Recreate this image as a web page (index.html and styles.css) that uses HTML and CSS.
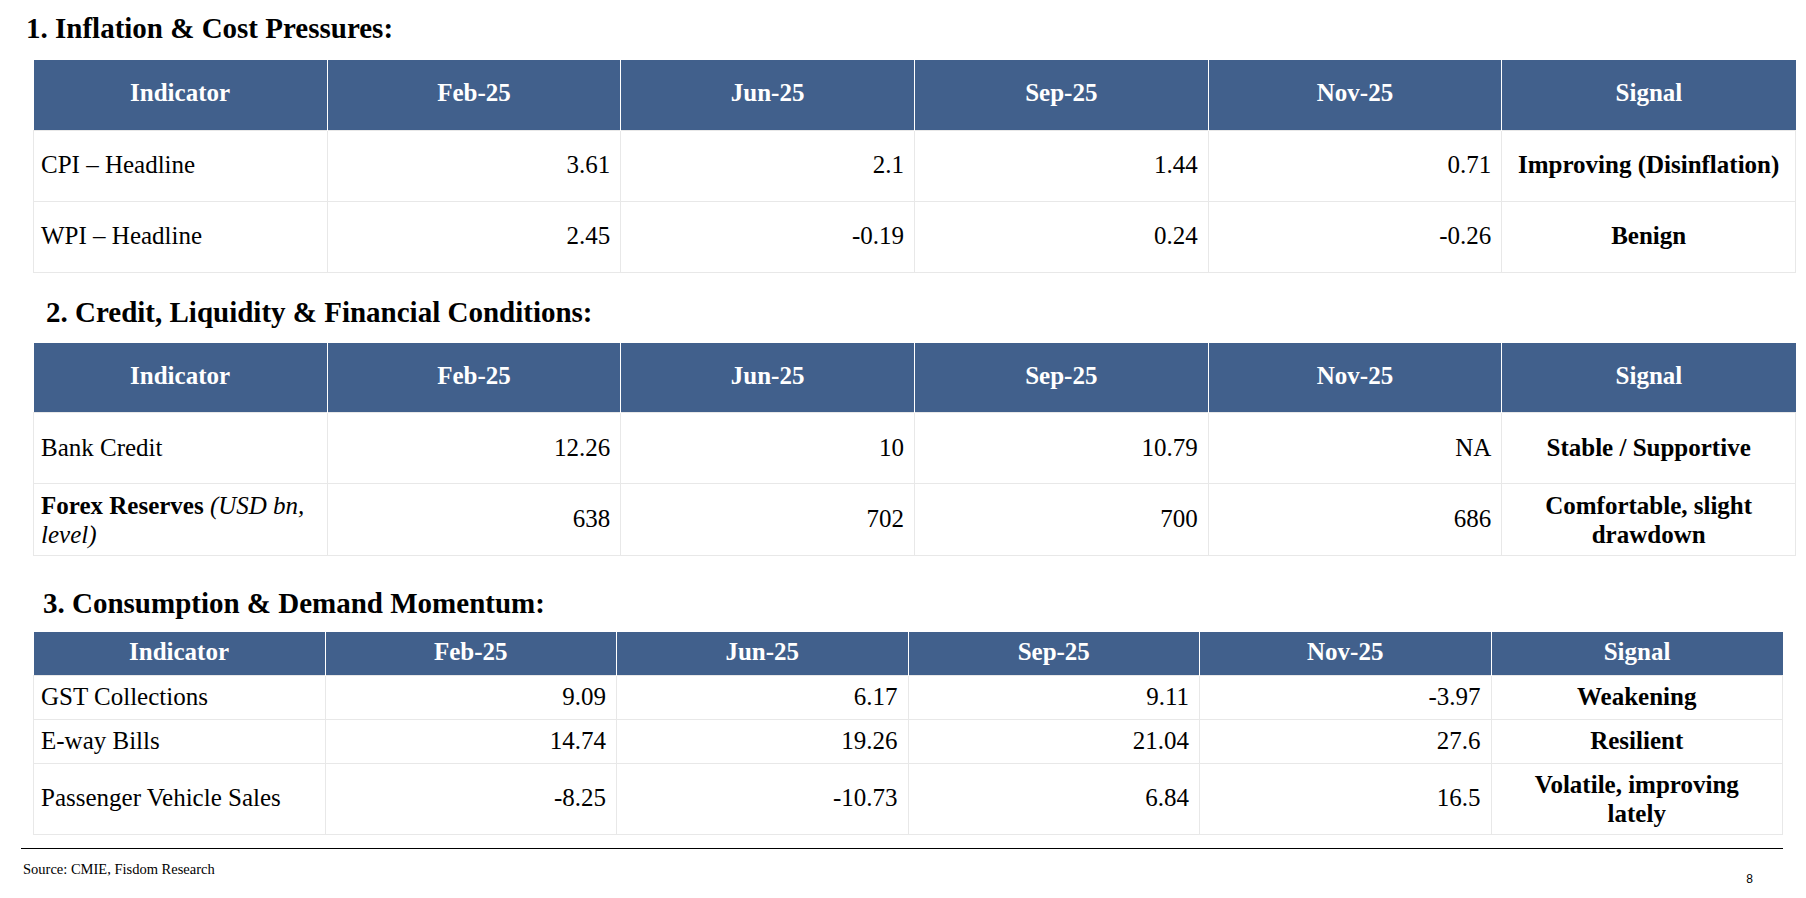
FILE: index.html
```html
<!DOCTYPE html>
<html lang="en">
<head>
<meta charset="utf-8">
<title>Macro Indicators</title>
<link rel="stylesheet" href="styles.css">
</head>
<body>
<div class="page">
  <div class="section-title t1">1. Inflation &amp; Cost Pressures:</div>
  <table class="data data-wide t1-table">
    <thead>
      <tr class="hrow-tall"><th>Indicator</th><th>Feb-25</th><th>Jun-25</th><th>Sep-25</th><th>Nov-25</th><th>Signal</th></tr>
    </thead>
    <tbody>
      <tr class="row-71"><td class="name">CPI – Headline</td><td class="num">3.61</td><td class="num">2.1</td><td class="num">1.44</td><td class="num">0.71</td><td class="signal">Improving (Disinflation)</td></tr>
      <tr class="row-71"><td class="name">WPI – Headline</td><td class="num">2.45</td><td class="num">-0.19</td><td class="num">0.24</td><td class="num">-0.26</td><td class="signal">Benign</td></tr>
    </tbody>
  </table>

  <div class="section-title t2">2. Credit, Liquidity &amp; Financial Conditions:</div>
  <table class="data data-wide t2-table">
    <thead>
      <tr class="hrow-tall"><th>Indicator</th><th>Feb-25</th><th>Jun-25</th><th>Sep-25</th><th>Nov-25</th><th>Signal</th></tr>
    </thead>
    <tbody>
      <tr class="row-71"><td class="name">Bank Credit</td><td class="num">12.26</td><td class="num">10</td><td class="num">10.79</td><td class="num">NA</td><td class="signal">Stable / Supportive</td></tr>
      <tr class="row-72"><td class="name wrap"><b>Forex Reserves</b> <i>(USD bn,</i> <i>level)</i></td><td class="num">638</td><td class="num">702</td><td class="num">700</td><td class="num">686</td><td class="signal wrap">Comfortable, slight drawdown</td></tr>
    </tbody>
  </table>

  <div class="section-title t3">3. Consumption &amp; Demand Momentum:</div>
  <table class="data data-narrow t3-table">
    <thead>
      <tr class="hrow-short"><th>Indicator</th><th>Feb-25</th><th>Jun-25</th><th>Sep-25</th><th>Nov-25</th><th>Signal</th></tr>
    </thead>
    <tbody>
      <tr class="row-44"><td class="name">GST Collections</td><td class="num">9.09</td><td class="num">6.17</td><td class="num">9.11</td><td class="num">-3.97</td><td class="signal">Weakening</td></tr>
      <tr class="row-44"><td class="name">E-way Bills</td><td class="num">14.74</td><td class="num">19.26</td><td class="num">21.04</td><td class="num">27.6</td><td class="signal">Resilient</td></tr>
      <tr class="row-71"><td class="name">Passenger Vehicle Sales</td><td class="num">-8.25</td><td class="num">-10.73</td><td class="num">6.84</td><td class="num">16.5</td><td class="signal wrap">Volatile, improving lately</td></tr>
    </tbody>
  </table>

  <div class="footer">
    <span class="source">Source: CMIE, Fisdom Research</span>
    <span class="page-num">8</span>
  </div>
</div>
</body>
</html>
```

FILE: styles.css
```css
html, body {
  margin: 0;
  padding: 0;
  background: #ffffff;
}

body {
  font-family: "Liberation Serif", "Times New Roman", serif;
  color: #000000;
}

.page {
  width: 1806px;
  height: 898px;
  padding-top: 11px;
  box-sizing: border-box;
  overflow: hidden;
}

.section-title {
  font-size: 29px;
  line-height: 34px;
  font-weight: bold;
  color: #000;
}

.t1 { padding-left: 26px; }
.t2 { padding-left: 46px; margin-top: 22px; }
.t3 { padding-left: 43px; margin-top: 30px; }

.data {
  border-collapse: collapse;
  table-layout: fixed;
  margin-left: 33px;
  font-size: 25px;
  line-height: 1.15;
}

.data-wide { width: 1763px; }
.data-narrow { width: 1750px; }

.t1-table { margin-top: 15px; }
.t2-table { margin-top: 14px; }
.t3-table { margin-top: 12px; }

.data th {
  background: #41608c;
  color: #ffffff;
  font-weight: bold;
  text-align: center;
  vertical-align: middle;
  padding: 0 6px 2px;
  border-left: 1px solid #ffffff;
  border-right: 1px solid #ffffff;
}

.data th:first-child { border-left: none; }
.data th:last-child { border-right: none; }

.data td {
  border: 1px solid #e8e8e8;
  vertical-align: middle;
  padding: 0;
}

.data td.wrap {
  line-height: 29px;
}

.hrow-tall { height: 70px; }
.hrow-short { height: 43px; }
.row-71 { height: 71px; }
.row-72 { height: 72px; }
.row-44 { height: 44px; }

.data td.name {
  text-align: left;
  padding-left: 7px;
  padding-right: 6px;
}

.data td.num {
  text-align: right;
  padding-right: 10px;
}

.data td.signal {
  text-align: center;
  font-weight: bold;
  padding: 0 12px;
}

.footer {
  margin: 13px 0 0 21px;
  width: 1762px;
  border-top: 1px solid #000000;
  display: flex;
  justify-content: space-between;
  align-items: flex-start;
  padding: 12px 30px 0 2px;
  box-sizing: border-box;
}

.source {
  font-size: 14.5px;
  line-height: 17px;
  color: #000;
}

.page-num {
  font-family: "Liberation Sans", Arial, sans-serif;
  font-size: 12px;
  line-height: 14px;
  margin-top: 11px;
  color: #000;
}
```
